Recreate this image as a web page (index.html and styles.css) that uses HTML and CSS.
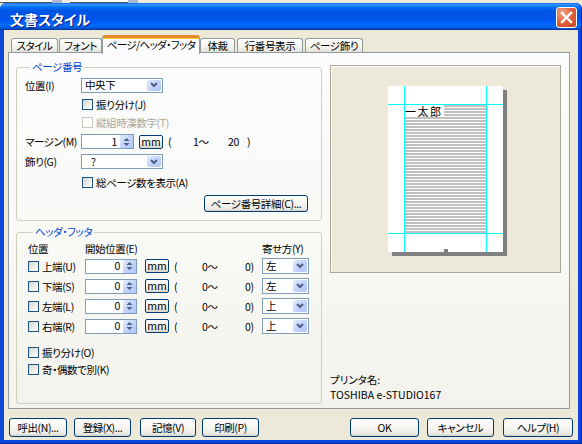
FILE: index.html
```html
<!DOCTYPE html>
<html lang="ja">
<head>
<meta charset="utf-8">
<title>文書スタイル</title>
<link rel="stylesheet" href="styles.css">
</head>
<body>
<div class="backdrop">
  <span class="bk bk-w1"></span><span class="bk bk-dd"></span><span class="bk bk-w2"></span><span class="bk bk-dd"></span>
</div>
<div class="window">
  <div class="titlebar">
    <span class="title">文書スタイル</span>
    <span class="close"><svg width="19" height="19" viewBox="0 0 19 19"><path d="M5 5 L14 14 M14 5 L5 14" stroke="#fff" stroke-width="2.4" stroke-linecap="square"/></svg></span>
  </div>
  <div class="client">
    <div class="tabs">
      <div class="tab t1">スタイル</div>
      <div class="tab t2">フォント</div>
      <div class="tab sel">ページ/ヘッダ・フッタ</div>
      <div class="tab t4">体裁</div>
      <div class="tab t5">行番号表示</div>
      <div class="tab t6">ページ飾り</div>
    </div>
    <div class="panel">
      <div class="col-left">
        <fieldset class="group g1">
          <legend>ページ番号</legend>
          <div class="row h20">
            <span class="lbl">位置(I)</span>
            <div class="combo c82"><span class="val">中央下</span><span class="drop"><svg width="8" height="6" viewBox="0 0 8 6"><path d="M1 1 L4 4 L7 1" fill="none" stroke="#4d6185" stroke-width="2"/></svg></span></div>
          </div>
          <div class="row h18 indent">
            <span class="chk"><i class="box"></i>振り分け(J)</span>
          </div>
          <div class="row h19 indent">
            <span class="chk disabled"><i class="box"></i>縦組時漢数字(T)</span>
          </div>
          <div class="row h19">
            <span class="lbl">マージン(M)</span>
            <div class="spin s53"><span class="num">1</span><span class="spinbtn"><svg width="7" height="10" viewBox="0 0 7 10"><path d="M3.5 1 L6.5 4 L0.5 4 Z M3.5 9 L6.5 6 L0.5 6 Z" fill="#4d6185"/></svg></span></div>
            <span class="mm">mm</span>
            <span class="txt m-a">(</span><span class="txt m-b">1～</span><span class="txt m-c">20</span><span class="txt">)</span>
          </div>
          <div class="row h21">
            <span class="lbl">飾り(G)</span>
            <div class="combo c82"><span class="val val-q">?</span><span class="drop"><svg width="8" height="6" viewBox="0 0 8 6"><path d="M1 1 L4 4 L7 1" fill="none" stroke="#4d6185" stroke-width="2"/></svg></span></div>
          </div>
          <div class="row h20 indent">
            <span class="chk"><i class="box"></i>総ページ数を表示(A)</span>
          </div>
          <div class="row h23">
            <span class="btn detail">ページ番号詳細(C)...</span>
          </div>
        </fieldset>
        <fieldset class="group g2">
          <legend>ヘッダ・フッタ</legend>
          <div class="row h16 head">
            <span class="hc1">位置</span><span class="hc2">開始位置(E)</span><span>寄せ方(Y)</span>
          </div>
          <div class="row h20">
            <span class="cbcell"><span class="chk"><i class="box"></i>上端(U)</span></span>
            <div class="spin s52"><span class="num">0</span><span class="spinbtn"><svg width="7" height="10" viewBox="0 0 7 10"><path d="M3.5 1 L6.5 4 L0.5 4 Z M3.5 9 L6.5 6 L0.5 6 Z" fill="#4d6185"/></svg></span></div>
            <span class="mm mm2">mm</span>
            <span class="txt p-a">(</span><span class="txt p-b">0～</span><span class="txt p-c">0)</span>
            <div class="combo c47"><span class="val">左</span><span class="drop"><svg width="8" height="6" viewBox="0 0 8 6"><path d="M1 1 L4 4 L7 1" fill="none" stroke="#4d6185" stroke-width="2"/></svg></span></div>
          </div>
          <div class="row h20">
            <span class="cbcell"><span class="chk"><i class="box"></i>下端(S)</span></span>
            <div class="spin s52"><span class="num">0</span><span class="spinbtn"><svg width="7" height="10" viewBox="0 0 7 10"><path d="M3.5 1 L6.5 4 L0.5 4 Z M3.5 9 L6.5 6 L0.5 6 Z" fill="#4d6185"/></svg></span></div>
            <span class="mm mm2">mm</span>
            <span class="txt p-a">(</span><span class="txt p-b">0～</span><span class="txt p-c">0)</span>
            <div class="combo c47"><span class="val">左</span><span class="drop"><svg width="8" height="6" viewBox="0 0 8 6"><path d="M1 1 L4 4 L7 1" fill="none" stroke="#4d6185" stroke-width="2"/></svg></span></div>
          </div>
          <div class="row h20">
            <span class="cbcell"><span class="chk"><i class="box"></i>左端(L)</span></span>
            <div class="spin s52"><span class="num">0</span><span class="spinbtn"><svg width="7" height="10" viewBox="0 0 7 10"><path d="M3.5 1 L6.5 4 L0.5 4 Z M3.5 9 L6.5 6 L0.5 6 Z" fill="#4d6185"/></svg></span></div>
            <span class="mm mm2">mm</span>
            <span class="txt p-a">(</span><span class="txt p-b">0～</span><span class="txt p-c">0)</span>
            <div class="combo c47"><span class="val">上</span><span class="drop"><svg width="8" height="6" viewBox="0 0 8 6"><path d="M1 1 L4 4 L7 1" fill="none" stroke="#4d6185" stroke-width="2"/></svg></span></div>
          </div>
          <div class="row h20">
            <span class="cbcell"><span class="chk"><i class="box"></i>右端(R)</span></span>
            <div class="spin s52"><span class="num">0</span><span class="spinbtn"><svg width="7" height="10" viewBox="0 0 7 10"><path d="M3.5 1 L6.5 4 L0.5 4 Z M3.5 9 L6.5 6 L0.5 6 Z" fill="#4d6185"/></svg></span></div>
            <span class="mm mm2">mm</span>
            <span class="txt p-a">(</span><span class="txt p-b">0～</span><span class="txt p-c">0)</span>
            <div class="combo c47"><span class="val">上</span><span class="drop"><svg width="8" height="6" viewBox="0 0 8 6"><path d="M1 1 L4 4 L7 1" fill="none" stroke="#4d6185" stroke-width="2"/></svg></span></div>
          </div>
          <div class="row h18 gap-top">
            <span class="chk"><i class="box"></i>振り分け(O)</span>
          </div>
          <div class="row h17">
            <span class="chk"><i class="box"></i>奇・偶数で別(K)</span>
          </div>
        </fieldset>
      </div>
      <div class="col-right">
        <div class="preview">
          <div class="page">
            <div class="textarea"><span class="sample">一太郎</span></div>
            <i class="pageno"></i>
          </div>
        </div>
        <div class="printer">
          <div class="pline">プリンタ名:</div>
          <div class="pline">TOSHIBA e-STUDIO167</div>
        </div>
      </div>
    </div>
    <div class="buttons">
      <span class="btn b1">呼出(N)...</span>
      <span class="btn b2">登録(X)...</span>
      <span class="btn b3">記憶(V)</span>
      <span class="btn b4">印刷(P)</span>
      <span class="btn bok">OK</span>
      <span class="btn bcancel">キャンセル</span>
      <span class="btn bhelp">ヘルプ(H)</span>
    </div>
  </div>
</div>
</body>
</html>
```

FILE: styles.css
```css
* { box-sizing: border-box; }
html, body { margin: 0; padding: 0; }
body {
  width: 582px;
  height: 444px;
  overflow: hidden;
  background: #ece9d8;
  font-family: "Noto Sans CJK JP", "Noto Sans", sans-serif;
  font-size: 10.5px;
  letter-spacing: -0.4px;
  line-height: 13px;
  color: #000;
  font-feature-settings: "palt";
}

/* background app strip */
.backdrop { height: 3px; display: flex; background: #ece9d8; }
.bk { display: block; height: 3px; }
.bk-w1 { width: 52px; background: #fff; border-bottom: 1px solid #555; }
.bk-dd { width: 10px; background: #a9b8d6; margin-right: 4px; }
.bk-w2 { width: 58px; background: #fff; border-bottom: 1px solid #555; margin-left: 4px; }

/* window */
.window {
  height: 441px;
  display: flex;
  flex-direction: column;
  background: #0b46d9;
  border-radius: 6px 6px 0 0;
  border-right: 1px solid #0029a8;
  border-bottom: 1px solid #0029a8;
}
.titlebar {
  height: 27px;
  flex: none;
  display: flex;
  align-items: center;
  padding: 1px 4px 0 10px;
  border-radius: 6px 6px 0 0;
  background: linear-gradient(to bottom, #0058ee 0%, #3593ff 4%, #288eff 8%, #127dff 12%, #036ffc 16%, #0262ee 22%, #0057e5 28%, #0054e3 34%, #0055eb 60%, #005bf5 70%, #026afe 80%, #0062ef 88%, #0052d6 94%, #0040ab 97%, #003092 100%);
}
.title {
  flex: 1;
  color: #fff;
  font-weight: bold;
  font-size: 14px;
  letter-spacing: 0;
  line-height: 16px;
  padding-top: 3px;
  text-shadow: 1px 1px 0 #0a1883;
}
.close {
  width: 21px;
  height: 21px;
  display: flex;
  align-items: center;
  justify-content: center;
  border: 1px solid #fff;
  border-radius: 3px;
  background: radial-gradient(circle at 30% 25%, #f0a68a 0%, #e2643d 45%, #c8431b 100%);
}
.close svg { display: block; }

.client {
  flex: 1;
  margin: 0 3px 3px 4px;
  background: #ece9d8;
  display: flex;
  flex-direction: column;
}

/* tabs */
.tabs {
  height: 22px;
  flex: none;
  display: flex;
  align-items: flex-end;
  padding-left: 7px;
  position: relative;
  z-index: 2;
}
.tab {
  height: 14px;
  border: 1px solid #919b9c;
  border-bottom: none;
  border-radius: 3px 3px 0 0;
  background: linear-gradient(to bottom, #fff 0%, #f3f3ef 60%, #e3e2da 100%);
  text-align: center;
  line-height: 13px;
  white-space: nowrap;
  overflow: hidden;
}
.t1 { width: 47px; margin-right: 1px; }
.t2 { width: 43px; }
.sel {
  width: 98px;
  height: 19px;
  margin-bottom: -2px;
  background: #fcfcfe;
  border-top: 3px solid #e68b2c;
  box-shadow: inset 0 1px 0 #ffc83c;
  line-height: 14px;
  letter-spacing: -0.6px;
}
.t4 { width: 35px; margin-right: 2px; }
.t5 { width: 66px; margin-right: 2px; }
.t6 { width: 58px; }

/* panel */
.panel {
  height: 357px;
  flex: none;
  margin: 0 8px 0 4px;
  border: 1px solid #919b9c;
  background: linear-gradient(to bottom, #fcfcfe 0%, #f8f8f4 60%, #f3f2ec 100%);
  display: flex;
  padding: 0 0 0 7px;
}
.col-left {
  width: 306px;
  display: flex;
  flex-direction: column;
  padding-top: 8px;
}
.col-right {
  margin-left: 8px;
  display: flex;
  flex-direction: column;
  padding-top: 12px;
  padding-bottom: 6px;
}

/* group boxes */
.group {
  margin: 0;
  border: 1px solid #d0d0bf;
  border-radius: 3px;
  min-width: 0;
}
.group legend {
  margin-left: 5px;
  padding: 0 2px;
  color: #0046d5;
  line-height: 12px;
  height: 12px;
}
.g1 { height: 160px; padding: 2px 0 0 8px; }
.g2 { height: 178px; margin-top: 5px; padding: 2px 0 0 11px; }

.row { display: flex; align-items: center; white-space: nowrap; }
.h16 { height: 16px; }
.h17 { height: 17px; }
.h18 { height: 18px; }
.h19 { height: 19px; }
.h20 { height: 20px; }
.h21 { height: 21px; }
.h23 { height: 23px; }
.indent { padding-left: 57px; }
.gap-top { margin-top: 7px; }
.lbl { width: 56px; }

/* combo */
.combo {
  display: flex;
  align-items: center;
  height: 15px;
  border: 1px solid #7f9db9;
  background: #fff;
}
.c82 { width: 82px; }
.c47 { width: 47px; height: 16px; }
.val { flex: 1; padding-left: 3px; line-height: 12px; }
.val-q { padding-left: 9px; }
.drop {
  width: 14px;
  height: 11px;
  margin-right: 1px;
  display: flex;
  align-items: center;
  justify-content: center;
  border-radius: 2px;
  background: linear-gradient(135deg, #e3ebfd 0%, #c3d4fb 50%, #afc5f6 100%);
}
.c47 .drop { height: 12px; }
.drop svg { display: block; }

/* spin */
.spin {
  display: flex;
  align-items: center;
  height: 15px;
  border: 1px solid #7f9db9;
  background: #fff;
}
.s53 { width: 53px; }
.s52 { width: 52px; }
.num { flex: 1; text-align: right; padding-right: 2px; line-height: 12px; }
.spinbtn {
  width: 14px;
  height: 13px;
  display: flex;
  align-items: center;
  justify-content: center;
  background: linear-gradient(135deg, #e3ebfd 0%, #c3d4fb 50%, #afc5f6 100%);
  border-left: 1px solid #fff;
}
.spinbtn svg { display: block; }

/* small buttons */
.mm {
  width: 24px;
  height: 14px;
  margin-left: 5px;
  border: 1px solid #003c74;
  border-radius: 2px;
  background: linear-gradient(to bottom, #fff 0%, #f4f3ee 55%, #d8d3c8 100%);
  text-align: center;
  line-height: 12px;
  letter-spacing: 0;
}
.mm2 { margin-left: 8px; }
.txt { display: inline-block; }
.m-a { width: 25px; margin-left: 5px; }
.m-b { width: 35px; }
.m-c { width: 19px; }
.p-a { width: 28px; margin-left: 5px; }
.p-b { width: 43px; }
.p-c { width: 17px; }

/* checkbox */
.chk { display: flex; align-items: center; }
.box {
  width: 11px;
  height: 11px;
  margin-right: 3px;
  border: 1px solid #1c5180;
  background: linear-gradient(135deg, #d6d6cf 0%, #f0f0ec 60%, #fff 100%);
}
.disabled { color: #aca899; }
.disabled .box { border-color: #cac8bb; background: #fff; }
.cbcell { width: 57px; }

.head .hc1 { width: 57px; }
.head .hc2 { width: 177px; }

/* push buttons */
.btn {
  display: flex;
  align-items: center;
  justify-content: center;
  height: 19px;
  border: 1px solid #003c74;
  border-radius: 3px;
  background: linear-gradient(to bottom, #fff 0%, #f6f5f1 50%, #ecebe6 85%, #d6d0c5 100%);
  white-space: nowrap;
}
.detail { width: 104px; height: 17px; margin-left: 179px; }

/* preview */
.preview {
  width: 231px;
  height: 208px;
  border: 1px solid #aca899;
  box-shadow: inset 1px 1px 0 #fff;
  background: #ece9d8;
  padding: 20px 0 0 57px;
}
.page {
  position: relative;
  width: 115px;
  height: 166px;
  padding: 19px 17px;
  background:
    linear-gradient(to right, transparent 16px, #00ffff 16px, #00ffff 17px, transparent 17px, transparent 98px, #00ffff 98px, #00ffff 99px, transparent 99px),
    linear-gradient(to bottom, transparent 18px, #00ffff 18px, #00ffff 19px, transparent 19px, transparent 147px, #00ffff 147px, #00ffff 148px, transparent 148px),
    #fff;
  box-shadow: 4px 4px 0 #808080;
}
.textarea {
  height: 128px;
  background: repeating-linear-gradient(to bottom, #c0c0c0 0px, #c0c0c0 2px, #fff 2px, #fff 3px);
}
.sample {
  display: inline-block;
  background: #fff;
  font-size: 11px;
  line-height: 12px;
  letter-spacing: 1.5px;
  padding-right: 1px;
  font-feature-settings: normal;
}
.pageno {
  position: absolute;
  left: 56px;
  bottom: -1px;
  width: 4px;
  height: 4px;
  background: #808080;
}
.printer { margin-top: auto; }
.pline { height: 15px; line-height: 15px; letter-spacing: 0; }

/* bottom buttons */
.buttons {
  height: 19px;
  flex: none;
  margin-top: 9px;
  display: flex;
  padding-left: 5px;
}
.b1 { width: 58px; }
.b2 { width: 57px; margin-left: 7px; }
.b3 { width: 56px; margin-left: 9px; }
.b4 { width: 57px; margin-left: 6px; }
.bok { width: 69px; margin-left: auto; }
.bcancel { width: 67px; margin-left: 8px; }
.bhelp { width: 70px; margin-left: 9px; margin-right: 5px; }
```
